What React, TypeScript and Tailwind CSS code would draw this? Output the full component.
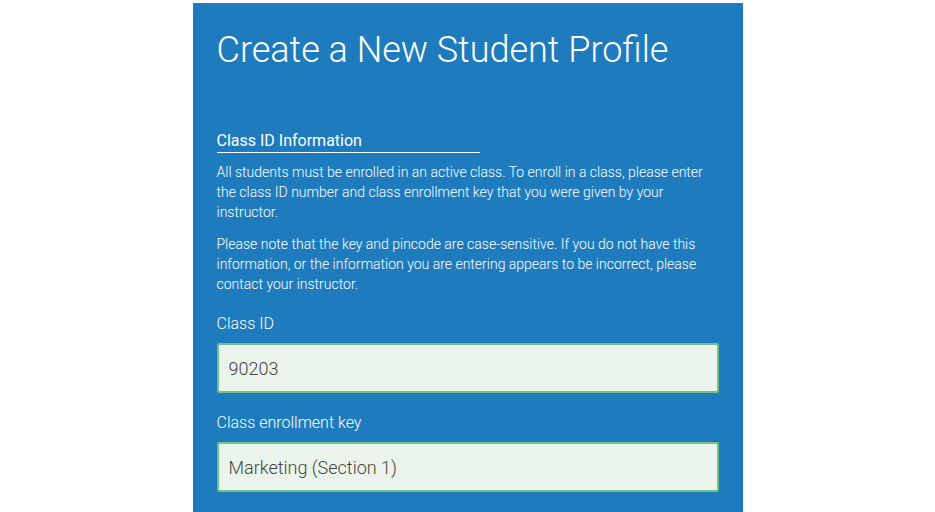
export default function App() {
  return (
    <div className="min-h-[512px] w-full bg-white flex justify-center pt-[3px]" style={{ fontFamily: "Roboto, 'Open Sans', sans-serif" }}>
      <div className="w-[550px] h-[509px] bg-[#1e7bbd] text-white px-[24px] overflow-hidden">
        <h1 className="text-[36px] font-light leading-[46px] pt-[24px]">Create a New Student Profile</h1>

        <div className="mt-[58px]">
          <h2 className="w-[263px] border-b border-white text-[16px] font-normal leading-[20px] pb-[1px]">Class ID Information</h2>
          <p className="text-[14px] font-light leading-[20px] mt-[9px]">
            All students must be enrolled in an active class. To enroll in a class, please enter the class ID number and class enrollment key that you were given by your instructor.
          </p>
          <p className="text-[14px] font-light leading-[20px] mt-[12px]">
            Please note that the key and pincode are case-sensitive. If you do not have this information, or the information you are entering appears to be incorrect, please contact your instructor.
          </p>
        </div>

        <div className="mt-[19px]">
          <label className="block text-[16px] font-light leading-[22px]">Class ID</label>
          <input
            readOnly
            value="90203"
            className="mt-[8px] w-[502px] h-[50px] bg-[#ebf4ea] border-2 border-[#72c184] rounded-[2px] px-[10px] text-[18px] font-light text-[#444] outline-none"
          />
        </div>

        <div className="mt-[19px]">
          <label className="block text-[16px] font-light leading-[22px]">Class enrollment key</label>
          <input
            readOnly
            value="Marketing (Section 1)"
            className="mt-[8px] w-[502px] h-[50px] bg-[#ebf4ea] border-2 border-[#72c184] rounded-[2px] px-[10px] text-[18px] font-light text-[#444] outline-none"
          />
        </div>
      </div>
    </div>
  );
}
